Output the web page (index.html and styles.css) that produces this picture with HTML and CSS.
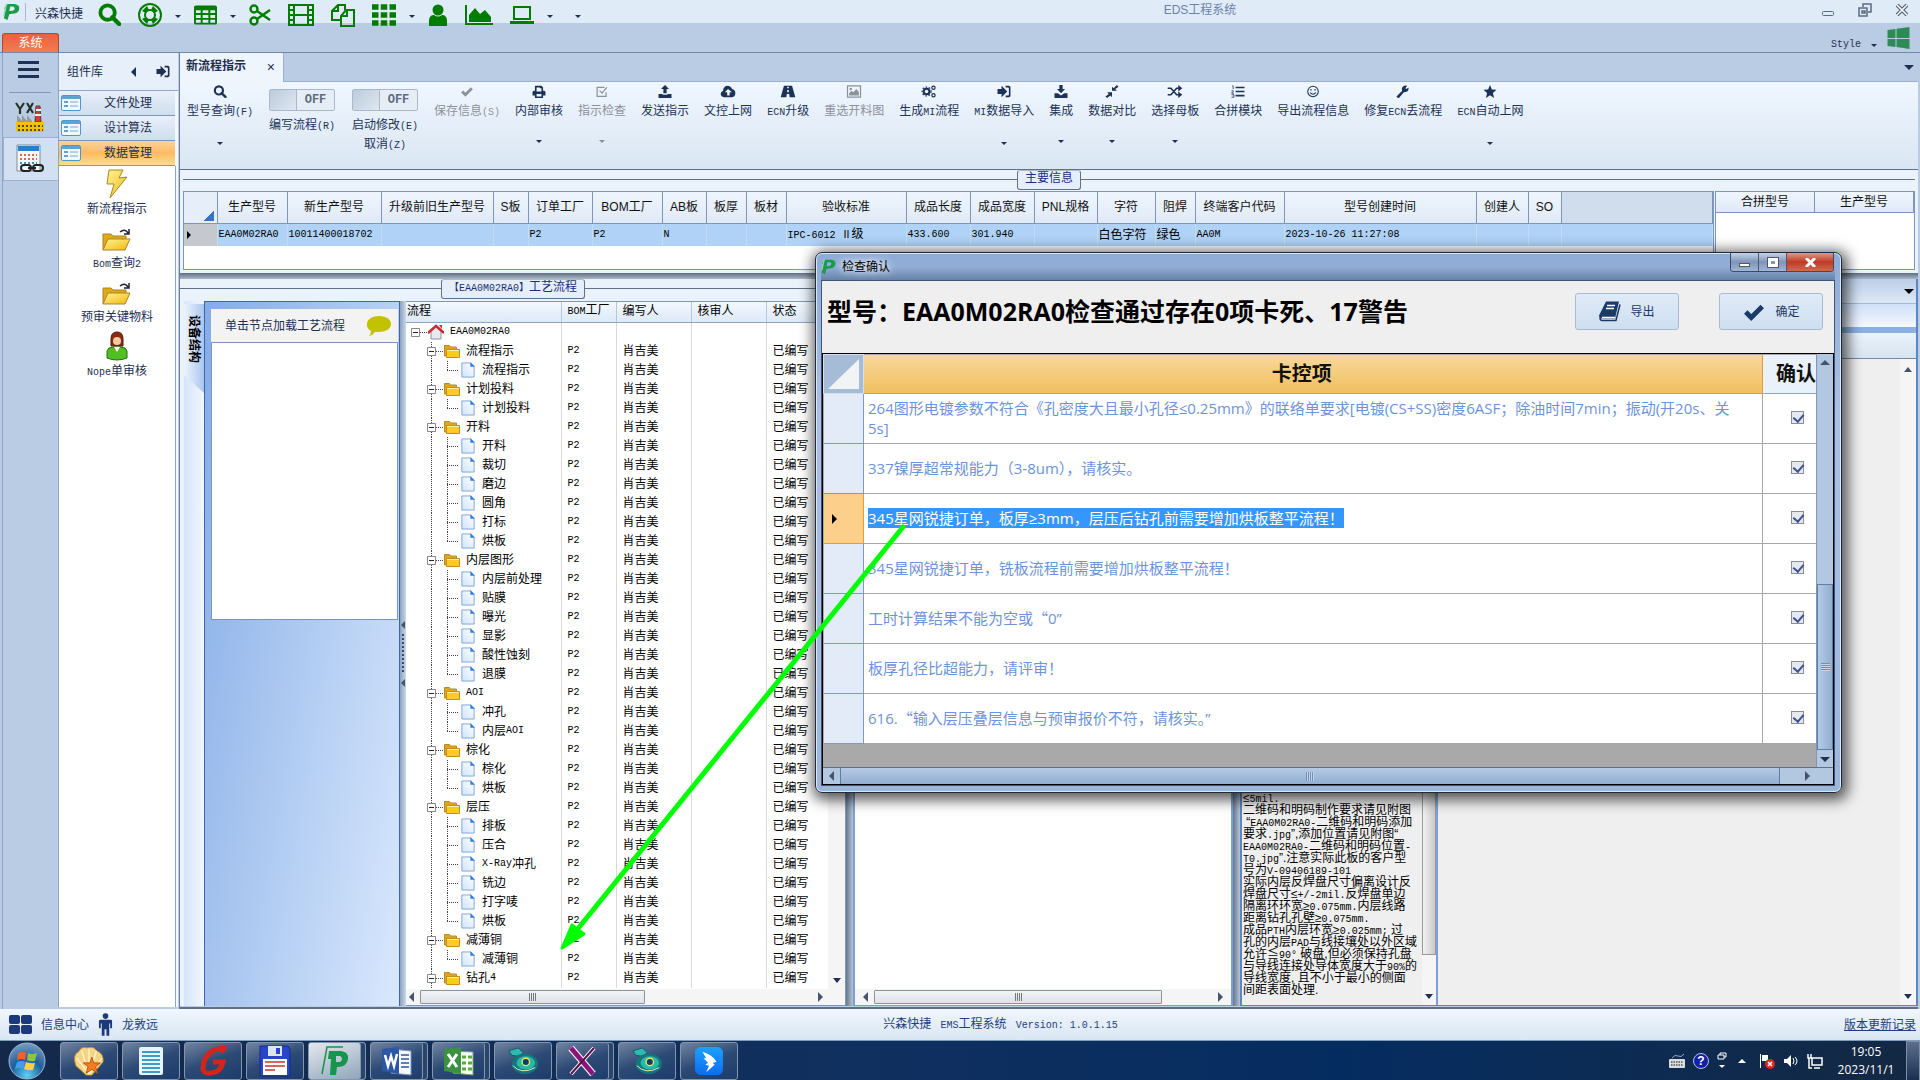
FILE: index.html
```html
<!DOCTYPE html>
<html lang="zh-CN">
<head>
	<meta charset="UTF-8">
	<title>EDS工程系统</title>
	<link rel="stylesheet" href="styles.css">
</head>
<body>
	<!-- 图标 -->
	<svg class="defs" width="0" height="0" aria-hidden="true">
		<linearGradient id="g-yellow" x1="0" y1="0" x2="1" y2="1"><stop offset="0" stop-color="#fff39a"/><stop offset="1" stop-color="#f2b90a"/></linearGradient>
		<linearGradient id="g-doc" x1="1" y1="0" x2="0" y2="1"><stop offset="0" stop-color="#ffffff"/><stop offset="1" stop-color="#cfe4fb"/></linearGradient>
		<radialGradient id="g-orb" cx=".5" cy=".9" r=".9"><stop offset="0" stop-color="#5fd0f5"/><stop offset=".5" stop-color="#1d5f9c"/><stop offset="1" stop-color="#7d9dc0"/></radialGradient>
		<linearGradient id="g-ding" x1="0" y1="0" x2="0" y2="1"><stop offset="0" stop-color="#1ea0ff"/><stop offset="1" stop-color="#0a6df0"/></linearGradient>
		<symbol id="i-logo" viewBox="0 0 20 20"><path d="M5 1h8q6 1 5 6t-8 5l-3 .5L5 19 1 17 3 6H1zm3 3L7 9l4-.5q2-1 2-2.500t-2-2z" fill="#1c9a4a" fill-rule="evenodd"/><path d="M4 1L1 14" stroke="#8fd9b0" stroke-width="1.500"/></symbol>
		<symbol id="i-search" viewBox="0 0 24 24"><circle cx="10" cy="10" r="7.500" fill="none" stroke="currentColor" stroke-width="4"/><path d="M15 15l7 7" stroke="currentColor" stroke-width="4.500" stroke-linecap="round"/></symbol>
		<symbol id="i-life" viewBox="0 0 24 24"><circle cx="12" cy="12" r="11" fill="none" stroke="currentColor" stroke-width="2"/><circle cx="12" cy="12" r="5" fill="none" stroke="currentColor" stroke-width="2"/><path d="M4 8l4 2 3-3-2-4zM20 8l-4 2-3-3 2-4zM4 16l4-2 3 3-2 4zM20 16l-4-2-3 3 2 4z" fill="currentColor"/></symbol>
		<symbol id="i-table" viewBox="0 0 24 22"><path fill-rule="evenodd" fill="currentColor" d="M2 1h20q2 0 2 2v16q0 2-2 2H2q-2 0-2-2V3q0-2 2-2zm0 5v3h5V6zm7 0v3h6V6zm8 0v3h5V6zM2 11v3h5v-3zm7 0v3h6v-3zm8 0v3h5v-3zM2 16v3h5v-3zm7 0v3h6v-3zm8 0v3h5v-3z"/></symbol>
		<symbol id="i-cut" viewBox="0 0 22 22"><g fill="none" stroke="currentColor" stroke-width="2.400"><circle cx="5" cy="5" r="3.500"/><circle cx="5" cy="17" r="3.500"/><path d="M8 7l13 9M8 15l13-9"/></g></symbol>
		<symbol id="i-film" viewBox="0 0 26 24"><path fill-rule="evenodd" fill="currentColor" d="M0 1h26v22H0zM2 3v3h3V3zm0 5v3h3V8zm0 5v3h3v-3zm0 5v3h3v-3zM21 3v3h3V3zm0 5v3h3V8zm0 5v3h3v-3zm0 5v3h3v-3zM7 3v8h12V3zm0 10v8h12v-8z"/></symbol>
		<symbol id="i-copy" viewBox="0 0 24 24"><path fill="none" stroke="currentColor" stroke-width="2" d="M9 17H1V8l6-6h7v5M7 2v6H1M10 23V13l5-6h8v16zM16 7v6h-6"/></symbol>
		<symbol id="i-grid" viewBox="0 0 24 22"><path stroke="currentColor" stroke-width="5.500" stroke-dasharray="6.500 2.250" d="M0 3h24M0 11h24M0 19h24"/></symbol>
		<symbol id="i-user" viewBox="0 0 20 22"><circle cx="10" cy="6" r="5.500" fill="currentColor"/><path fill="currentColor" d="M1 22q-1-12 5-11 4 3 8 0 6-1 5 11z"/></symbol>
		<symbol id="i-chart" viewBox="0 0 28 22"><path fill="currentColor" d="M0 1h2v18h26v2H0zM4 18V11l6-7 5 6 5-4 6 7v5z"/></symbol>
		<symbol id="i-laptop" viewBox="0 0 24 20"><path fill="none" stroke="currentColor" stroke-width="2" d="M4 2h16v12H4z"/><path fill="currentColor" d="M0 16h24v3H0z"/></symbol>
		<symbol id="i-check" viewBox="0 0 16 16"><path fill="none" stroke="currentColor" stroke-width="3.500" d="M2 8l4 4L14 4"/></symbol>
		<symbol id="i-print" viewBox="0 0 16 16"><path fill="currentColor" fill-rule="evenodd" d="M3 1h8l2 2v4h1q2 0 2 2v4h-3v3H3v-3H0V9q0-2 2-2h1zm2 2v5h6V4H9V3zm0 8v3h6v-3z"/></symbol>
		<symbol id="i-csq" viewBox="0 0 16 16"><path fill="none" stroke="currentColor" stroke-width="1.500" d="M13 9v5H2V3h9M5 7l3 3 6-7"/></symbol>
		<symbol id="i-up" viewBox="0 0 16 16"><path fill="currentColor" d="M8 0l5 5h-3v5H6V5H3zM0 11h5v1h6v-1h5v5H0z"/></symbol>
		<symbol id="i-cloud" viewBox="0 0 18 16"><path fill="currentColor" fill-rule="evenodd" d="M4 15q-4-1-4-4t3-4q0-5 5-6 4 0 6 4 4 1 4 5t-4 5zm5-10L5 9h3v4h3V9h3z"/></symbol>
		<symbol id="i-road" viewBox="0 0 18 16"><path fill="currentColor" fill-rule="evenodd" d="M4 1h10l4 14h-7l-.500-4h-3L7 15H0zm4 1v2h2V2zm0 4v3h2V6z"/></symbol>
		<symbol id="i-img" viewBox="0 0 18 16"><path fill="none" stroke="currentColor" stroke-width="1.500" d="M1 1h16v14H1z"/><path fill="currentColor" d="M3 13v-3l3-3 2 2 4-4 3 4v4z"/><circle cx="5" cy="5" r="1.500" fill="currentColor"/></symbol>
		<symbol id="i-cogs" viewBox="0 0 18 16"><g fill="none" stroke="currentColor"><circle cx="6" cy="8" r="3.500" stroke-width="2.500"/><circle cx="6" cy="8" r="5.500" stroke-width="1.500" stroke-dasharray="2 2"/><circle cx="14.500" cy="3.500" r="2" stroke-width="1.500"/><circle cx="14.500" cy="12.500" r="2" stroke-width="1.500"/></g></symbol>
		<symbol id="i-in" viewBox="0 0 16 16"><path fill="currentColor" d="M0 5h5V1l7 7-7 7v-4H0zM10 1h4q2 0 2 2v10q0 2-2 2h-4v-2h3q1 0 1-1V4q0-1-1-1h-3z"/></symbol>
		<symbol id="i-down" viewBox="0 0 16 16"><path fill="currentColor" d="M6 0h4v5h3l-5 5-5-5h3zM0 10h4l4 3 4-3h4v6H0z"/></symbol>
		<symbol id="i-comp" viewBox="0 0 16 16"><path fill="currentColor" d="M16 2l-4 3 2 2H8V2l2 2 4-4zM0 14l4-3-2-2h6v6l-2-2-4 3z"/></symbol>
		<symbol id="i-rand" viewBox="0 0 18 16"><path fill="none" stroke="currentColor" stroke-width="2" d="M0 4h4l7 8h4M0 12h4l7-8h4"/><path fill="currentColor" d="M13 0l5 4-5 4zM13 8l5 4-5 4z"/></symbol>
		<symbol id="i-list" viewBox="0 0 16 16"><path stroke="currentColor" stroke-width="2" d="M5 3h11M5 8h11M5 13h11"/><path stroke="currentColor" fill="none" d="M1 1h1v4M0 7h2v1L0 10h3M0 12h3v3H0"/></symbol>
		<symbol id="i-smile" viewBox="0 0 16 16"><circle cx="8" cy="8" r="6.500" fill="none" stroke="currentColor" stroke-width="1.300"/><path fill="none" stroke="currentColor" stroke-width="1.300" d="M4.500 9.500q3.500 4 7 0M5.500 5v2M10.500 5v2"/></symbol>
		<symbol id="i-wrench" viewBox="0 0 16 16"><path fill="currentColor" d="M15 3l-3 2-1-1 2-3q-4-1-6 2-1 2 0 4l-7 7q1 2 3 2l6-7q6 0 6-6z"/></symbol>
		<symbol id="i-star" viewBox="0 0 16 16"><path fill="currentColor" d="M8 0l2.300 5.400 5.700.500-4.400 3.800L13 16l-5-3.300L3 16l1.400-6.300L0 5.900l5.700-.500z"/></symbol>
		<symbol id="i-form" viewBox="0 0 20 16"><rect x=".5" y=".5" width="19" height="15" rx="1.500" fill="#eef8ff" stroke="#4f97c9"/><path fill="#5ba4d6" d="M1 1h18v3H1z"/><path stroke="#3f7fc0" stroke-width="1.500" d="M3 7h4M3 11h4"/><path stroke="#b8cfe0" stroke-width="2" d="M9 7h8M9 11h8"/></symbol>
		<symbol id="i-bolt" viewBox="0 0 24 30"><path fill="url(#g-yellow)" stroke="#a08a20" d="M4 1l14 0-4 8 8-1L5 29l4-14H2z"/></symbol>
		<symbol id="i-open" viewBox="0 0 30 24"><path fill="#e3a915" stroke="#a8852a" d="M1 22V6h8l2 2h13v5"/><path fill="url(#g-yellow)" stroke="#a8852a" d="M1 22l5-11h22l-5 11z"/><path fill="none" stroke="#223" stroke-width="1.500" d="M18 4q5-4 8 1M27 1v5h-5"/></symbol>
		<symbol id="i-person" viewBox="0 0 22 30"><path fill="#8e2a14" stroke="#4a1a10" d="M5 8q0-7 6-7t6 7v7H5z"/><circle cx="11" cy="10" r="4" fill="#f4c9a0"/><path fill="#4fbf22" stroke="#256b10" d="M1 27V20q1-4 6-4h8q5 0 6 4v7q-10 4-20 0z"/><path fill="#fff" d="M8 16l3 5 3-5z"/></symbol>
		<symbol id="i-house" viewBox="0 0 16 16"><path fill="#e8eaf0" stroke="#8d93a5" d="M3 15V7l5-5 5 5v8z"/><path fill="none" stroke="#cc2b2f" stroke-width="2.500" d="M0 9l8-7 8 7"/><path fill="#cc2b2f" d="M11 1h3v4z"/></symbol>
		<symbol id="i-folder" viewBox="0 0 16 14"><path fill="#e0a51e" stroke="#b98a2c" d="M.5 12V1.500h5l1 1.500h6v9z"/><path fill="#ffc926" stroke="#c58f16" d="M2.500 13.500V5.500h13v8z"/><path stroke="#fff0a0" d="M3 6.500h12"/></symbol>
		<symbol id="i-doc" viewBox="0 0 15 17"><path fill="url(#g-doc)" stroke="#7ba3d8" d="M1 1h9l4 4v11H1z"/><path fill="#2f7de0" d="M10 0v5h5z"/></symbol>
		<symbol id="i-box" viewBox="0 0 9 9"><path fill="#fff" stroke="#888" d="M.5.5h8v8h-8z"/><path stroke="#222" d="M2 4.500h5"/></symbol>
		<symbol id="i-chat" viewBox="0 0 24 20"><path fill="#c2c200" d="M12 0c16 0 16 16 0 16q-2 0-4 0-2 3-6 4 2-2 2-5C-4 10 0 0 12 0z"/></symbol>
		<symbol id="i-book" viewBox="0 0 22 20"><path fill="#1c3a66" d="M7 0h13l-4 17H3q-3 0-3-3z"/><path stroke="#fff" stroke-width="1.300" fill="none" d="M8 4h8M7 7h8M3 16h13"/><path fill="none" stroke="#1c3a66" stroke-width="1.500" d="M21 3l-4 16H3q-2 0-2-3"/></symbol>
		<symbol id="i-win" viewBox="0 0 22 22"><path fill="#2e8b57" d="M0 3l8-1v9H0zM9 1.800L22 0v11H9zM0 12h8v8l-8-1zM9 12h13v10L9 20z"/></symbol>
		<symbol id="i-factory" viewBox="0 0 30 30"><path d="M1 1l4 6v5M9 1L5 7M12 1l6 10M18 1l-6 10" stroke="#26332a" stroke-width="2.200" fill="none"/><path fill="#d33c34" stroke="#444" d="M21 4h4l1 16h-6z"/><path stroke="#eee" stroke-width="2" d="M21 8h5M20 13h6"/><path fill="#9a9a9a" d="M2 20v-7l5 6v-6l5 6v-6l5 6v2z"/><path fill="#f2c200" d="M1 20h28v10H1z"/><path stroke="#5a4700" stroke-width="2" stroke-dasharray="2 2" d="M3 24h25M3 28h25"/></symbol>
		<symbol id="i-calc" viewBox="0 0 30 30"><path fill="#f5f8fb" stroke="#7d8a99" d="M2 1h23v26H2z"/><path fill="#2a7fc9" d="M3 2h21v5H3z"/><path stroke="#d86a4a" stroke-width="2" stroke-dasharray="2 2" d="M5 11h17M5 15h17"/><path stroke="#3c8fd0" stroke-width="2" stroke-dasharray="2 2" d="M5 19h17"/><g fill="none" stroke="#222" stroke-width="2"><rect x="6" y="21" width="10" height="6" rx="3"/><rect x="18" y="21" width="10" height="6" rx="3"/></g><path stroke="#222" stroke-width="2" d="M13 24h8"/></symbol>
		<symbol id="i-shell" viewBox="0 0 34 32"><path fill="#f5d486" stroke="#c98c37" d="M14 31L3 21Q-1 9 6 6 9 0 15 2q7-2 10 3 8 3 7 12L20 31z"/><path stroke="#fff2cc" stroke-width="1.500" d="M17 30L4 13M17 30L9 5M17 30V3M17 30l8-25M17 30l14-17"/><path fill="#f07d1e" stroke="#b5500c" d="M20 12l2 6h7l-5 4 2 7-6-4-6 4 2-7-5-4h7z"/></symbol>
		<symbol id="i-note" viewBox="0 0 26 28"><rect x="1" y="0" width="24" height="28" rx="2" fill="#e6f4fb"/><path stroke="#3c9cc4" stroke-width="2" d="M4 5h18M4 9h18M4 13h18M4 17h18M4 21h18M4 25h18"/></symbol>
		<symbol id="i-gee" viewBox="0 0 28 30"><path fill="none" stroke="#d3261b" stroke-width="5" d="M22 6l3-4-10 2Q4 10 4 22q0 6 8 5 10-1 12-11H14"/></symbol>
		<symbol id="i-save" viewBox="0 0 32 32"><path fill="#2846c8" stroke="#122a8a" d="M1 1h28l2 3v27H1z"/><path fill="#dfe4ee" d="M9 1h14v10H9z"/><path fill="#2846c8" d="M17 3h4v6h-4z"/><path fill="#fff" d="M4 14h24v16H4z"/><path stroke="#c33" stroke-width="1.500" d="M6 17h20M6 21h20M6 25h10"/></symbol>
		<symbol id="i-pap" viewBox="0 0 28 30"><path fill="none" stroke="#16954c" stroke-width="1.500" d="M12 1H6L1 28M12 1h10"/><path fill="#16954c" fill-rule="evenodd" d="M8 5h12q8 1 7 8t-9 8h-2l-1 8h-6l1-16H7zm7 5v6h4q2-1 2-3t-2-3z"/></symbol>
		<symbol id="i-word" viewBox="0 0 32 30"><path fill="#f7f9fc" stroke="#7a93c0" d="M10 3l20 2v24l-20-2z"/><path fill="#2b57a5" d="M1 3l17-2v27L1 25z"/><path fill="none" stroke="#fff" stroke-width="2.500" d="M4 9l3 11 3-10 3 10 3-12"/><path stroke="#2b57a5" stroke-width="1.500" d="M20 9h8M20 13h8M20 17h8M20 21h8"/></symbol>
		<symbol id="i-excel" viewBox="0 0 32 30"><path fill="#f7fcf7" stroke="#6ba36c" d="M10 5l20 1v23l-20-2z"/><path fill="#3a9140" d="M1 3l17-2v27L1 25z"/><path stroke="#fff" stroke-width="3" d="M5 8l9 13M14 8L5 21"/><path stroke="#5aab3c" stroke-width="3" stroke-dasharray="4 2" d="M19 11h10M19 17h10M19 23h10"/></symbol>
		<symbol id="i-eye" viewBox="0 0 34 30"><path fill="#2fb9b0" stroke="#0d5a62" d="M2 4l10-3 5 5-4 4-8-1z"/><ellipse cx="19" cy="18" rx="14" ry="11" fill="#14757c"/><ellipse cx="20" cy="17" rx="10" ry="7" fill="#2cb8a6"/><circle cx="20" cy="16" r="4" fill="#153c50" stroke="#e9e26a" stroke-width="1.500"/><path stroke="#e8f5c0" fill="none" d="M6 20q10 10 24 2"/></symbol>
		<symbol id="i-xx" viewBox="0 0 32 32"><path stroke="#fff" stroke-width="7" d="M4 3l22 26"/><path stroke="#fff" stroke-width="4" d="M27 3L4 29"/><path stroke="#8b1478" stroke-width="5" d="M4 3l22 26"/><path stroke="#5a1050" stroke-width="2" d="M27 3L4 29"/></symbol>
		<symbol id="i-ding" viewBox="0 0 30 30"><rect width="30" height="30" rx="6" fill="url(#g-ding)"/><path fill="#fff" d="M8 5q12 4 15 11l-4 1 2 2-9 8 3-7-4-1 3-2-5-5 3 0z"/></symbol>
		<symbol id="i-men" viewBox="0 0 16 24"><circle cx="8" cy="3" r="3" fill="#1c3a7a"/><path fill="#1c3a7a" d="M1 8q0-1 2-1h10q2 0 2 1v8h-2v-5h-1v13H9v-7H7v7H4V11H3v5H1z"/></symbol>
	</svg>

	<header class="titlebar">
		<svg class="ic logo" width="18" height="18"><use href="#i-logo"/></svg>
		<span class="brand">兴森快捷</span>
		<div class="quick">
			<button aria-label="查询"><svg width="23" height="23"><use href="#i-search"/></svg></button>
			<button aria-label="帮助"><svg width="24" height="24"><use href="#i-life"/></svg></button><i class="caret"></i>
			<button aria-label="表格"><svg width="23" height="22"><use href="#i-table"/></svg></button><i class="caret"></i>
			<button aria-label="剪切"><svg width="22" height="22"><use href="#i-cut"/></svg></button>
			<button aria-label="胶片"><svg width="26" height="24"><use href="#i-film"/></svg></button>
			<button aria-label="复制"><svg width="24" height="24"><use href="#i-copy"/></svg></button>
			<button aria-label="网格"><svg width="24" height="22"><use href="#i-grid"/></svg></button><i class="caret"></i>
			<button aria-label="用户"><svg width="20" height="22"><use href="#i-user"/></svg></button>
			<button aria-label="图表"><svg width="28" height="22"><use href="#i-chart"/></svg></button>
			<button aria-label="电脑"><svg width="24" height="20"><use href="#i-laptop"/></svg></button><i class="caret"></i>
			<i class="caret more"></i>
		</div>
		<span class="apptitle">EDS工程系统</span>
		<div class="winbtns">
			<button aria-label="最小化"><svg width="12" height="14" fill="none" stroke="#5d6b80"><rect x=".5" y="8.500" width="11" height="4" rx="1"/></svg></button>
			<button aria-label="还原"><svg width="14" height="14" fill="none" stroke="#5d6b80" stroke-width="1.500"><path d="M5 4V1h8v8h-3M1 5h8v8H1zM4 8h3v2H4z"/></svg></button>
			<button aria-label="关闭"><svg width="12" height="12" fill="none"><path d="M1 1l10 10M11 1L1 11" stroke="#5d6b80" stroke-width="4"/><path d="M1 1l10 10M11 1L1 11" stroke="#fff" stroke-width="1.500"/></svg></button>
		</div>
	</header>

	<nav class="tabband">
		<button class="systab">系统</button>
		<div class="style">
			<button class="en">Style</button><i class="caret"></i>
			<svg width="23" height="22"><use href="#i-win"/></svg>
		</div>
	</nav>

	<main class="body">
		<div class="rail">
			<button class="menu" aria-label="菜单"><i></i><i></i><i></i></button>
			<button class="railbtn" aria-label="工厂"><svg width="30" height="30"><use href="#i-factory"/></svg></button>
			<button class="railbtn on" aria-label="计算"><svg width="30" height="30"><use href="#i-calc"/></svg></button>
		</div>

		<aside class="sidebar">
			<div class="sidehead"><span>组件库</span><i class="arr left"></i><svg width="14" height="13"><use href="#i-in"/></svg></div>
			<button class="acc"><svg width="20" height="16"><use href="#i-form"/></svg><span>文件处理</span></button>
			<button class="acc"><svg width="20" height="16"><use href="#i-form"/></svg><span>设计算法</span></button>
			<button class="acc on"><svg width="20" height="16"><use href="#i-form"/></svg><span>数据管理</span></button>
			<div class="sidelist">
				<button><svg width="24" height="30"><use href="#i-bolt"/></svg><span>新流程指示</span></button>
				<button><svg width="30" height="26"><use href="#i-open"/></svg><span><span class="en">Bom</span>查询<span class="en">2</span></span></button>
				<button><svg width="30" height="26"><use href="#i-open"/></svg><span>预审关键物料</span></button>
				<button><svg width="22" height="30"><use href="#i-person"/></svg><span><span class="en">Nope</span>单审核</span></button>
			</div>
		</aside>

		<section class="work">
			<div class="doctabs"><div class="doctab"><b>新流程指示</b><button aria-label="关闭标签">×</button></div><i class="arr down"></i></div>

			<div class="ribbon">
				<button class="rb"><svg><use href="#i-search"/></svg><span>型号查询<span class="en">(F)</span></span><i class="caret"></i></button>
				<div class="rb tg"><button class="toggle"><i></i><b>OFF</b></button><span>编写流程<span class="en">(R)</span></span></div>
				<div class="rb tg"><button class="toggle"><i></i><b>OFF</b></button><span>启动修改<span class="en">(E)</span></span><span>取消<span class="en">(Z)</span></span></div>
				<button class="rb off" disabled><svg><use href="#i-check"/></svg><span>保存信息<span class="en">(S)</span></span></button>
				<button class="rb"><svg><use href="#i-print"/></svg><span>内部审核</span><i class="caret"></i></button>
				<button class="rb off" disabled><svg><use href="#i-csq"/></svg><span>指示检查</span><i class="caret"></i></button>
				<button class="rb"><svg><use href="#i-up"/></svg><span>发送指示</span></button>
				<button class="rb"><svg><use href="#i-cloud"/></svg><span>文控上网</span></button>
				<button class="rb"><svg><use href="#i-road"/></svg><span><span class="en">ECN</span>升级</span></button>
				<button class="rb off" disabled><svg><use href="#i-img"/></svg><span>重选开料图</span></button>
				<button class="rb"><svg><use href="#i-cogs"/></svg><span>生成<span class="en">MI</span>流程</span></button>
				<button class="rb"><svg><use href="#i-in"/></svg><span><span class="en">MI</span>数据导入</span><i class="caret"></i></button>
				<button class="rb"><svg><use href="#i-down"/></svg><span>集成</span><i class="caret"></i></button>
				<button class="rb"><svg><use href="#i-comp"/></svg><span>数据对比</span><i class="caret"></i></button>
				<button class="rb"><svg><use href="#i-rand"/></svg><span>选择母板</span><i class="caret"></i></button>
				<button class="rb"><svg><use href="#i-list"/></svg><span>合拼模块</span></button>
				<button class="rb"><svg><use href="#i-smile"/></svg><span>导出流程信息</span></button>
				<button class="rb"><svg><use href="#i-wrench"/></svg><span>修复<span class="en">ECN</span>丢流程</span></button>
				<button class="rb"><svg><use href="#i-star"/></svg><span><span class="en">ECN</span>自动上网</span><i class="caret"></i></button>
			</div>

			<!-- 主要信息 -->
			<div class="group info">
				<div class="legend"><span>主要信息</span></div>
				<div class="grids">
					<div class="gridbox">
						<table class="grid">
							<colgroup><col class="w33"><col class="w70"><col class="w94"><col class="w112"><col class="w35"><col class="w64"><col class="w70"><col class="w44"><col class="w40"><col class="w40"><col class="w120"><col class="w64"><col class="w64"><col class="w63"><col class="w58"><col class="w40"><col class="w89"><col class="w192"><col class="w52"><col class="w33"><col></colgroup>
							<thead><tr><th class="corner"></th><th>生产型号</th><th>新生产型号</th><th>升级前旧生产型号</th><th>S板</th><th>订单工厂</th><th>BOM工厂</th><th>AB板</th><th>板厚</th><th>板材</th><th>验收标准</th><th>成品长度</th><th>成品宽度</th><th>PNL规格</th><th>字符</th><th>阻焊</th><th>终端客户代码</th><th>型号创建时间</th><th>创建人</th><th>SO</th><th class="fill"></th></tr></thead>
							<tbody><tr><td class="rowhead"><i class="arr right"></i></td><td class="en">EAA0M02RA0</td><td class="en">10011400018702</td><td></td><td></td><td class="en">P2</td><td class="en">P2</td><td class="en">N</td><td></td><td></td><td><span class="en">IPC-6012 Ⅱ</span>级</td><td class="en">433.600</td><td class="en">301.940</td><td></td><td>白色字符</td><td>绿色</td><td class="en">AA0M</td><td class="en">2023-10-26 11:27:08</td><td></td><td></td><td></td></tr></tbody>
						</table>
					</div>
					<div class="gridbox side">
						<table class="grid"><thead><tr><th>合拼型号</th><th>生产型号</th></tr></thead></table>
					</div>
				</div>
			</div>
			<div class="hsplit"></div>

			<div class="lower">
				<div class="group flow">
					<div class="legend"><span><span class="en">【EAA0M02RA0】</span>工艺流程</span></div>
					<div class="flowbody">
						<div class="vtab"><b>设备结构</b></div>
						<div class="device">
							<div class="devhead"><span>单击节点加载工艺流程</span><svg width="24" height="20"><use href="#i-chat"/></svg></div>
							<div class="devbox"></div>
						</div>
						<div class="vsplit"><i class="arr left"></i><i class="dots"></i><i class="arr left"></i></div>
						<div class="treepane">
							<div class="treeview">
								<table class="tree">
									<colgroup><col class="w155"><col class="w55"><col class="w75"><col class="w75"><col></colgroup>
									<thead><tr><th>流程</th><th><span class="en">BOM</span>工厂</th><th>编写人</th><th>核审人</th><th>状态</th></tr></thead>
									<tbody>
										<tr><td><div class="node l0"><svg class="bx"><use href="#i-box"/></svg><svg><use href="#i-house"/></svg><span class="en">EAA0M02RA0</span></div></td><td></td><td></td><td></td><td></td></tr>
										<tr><td><div class="node l1"><svg class="bx"><use href="#i-box"/></svg><svg><use href="#i-folder"/></svg>流程指示</div></td><td>P2</td><td>肖吉美</td><td></td><td>已编写</td></tr>
										<tr><td><div class="node l2 last"><svg><use href="#i-doc"/></svg>流程指示</div></td><td>P2</td><td>肖吉美</td><td></td><td>已编写</td></tr>
										<tr><td><div class="node l1"><svg class="bx"><use href="#i-box"/></svg><svg><use href="#i-folder"/></svg>计划投料</div></td><td>P2</td><td>肖吉美</td><td></td><td>已编写</td></tr>
										<tr><td><div class="node l2 last"><svg><use href="#i-doc"/></svg>计划投料</div></td><td>P2</td><td>肖吉美</td><td></td><td>已编写</td></tr>
										<tr><td><div class="node l1"><svg class="bx"><use href="#i-box"/></svg><svg><use href="#i-folder"/></svg>开料</div></td><td>P2</td><td>肖吉美</td><td></td><td>已编写</td></tr>
										<tr><td><div class="node l2"><svg><use href="#i-doc"/></svg>开料</div></td><td>P2</td><td>肖吉美</td><td></td><td>已编写</td></tr>
										<tr><td><div class="node l2"><svg><use href="#i-doc"/></svg>裁切</div></td><td>P2</td><td>肖吉美</td><td></td><td>已编写</td></tr>
										<tr><td><div class="node l2"><svg><use href="#i-doc"/></svg>磨边</div></td><td>P2</td><td>肖吉美</td><td></td><td>已编写</td></tr>
										<tr><td><div class="node l2"><svg><use href="#i-doc"/></svg>圆角</div></td><td>P2</td><td>肖吉美</td><td></td><td>已编写</td></tr>
										<tr><td><div class="node l2"><svg><use href="#i-doc"/></svg>打标</div></td><td>P2</td><td>肖吉美</td><td></td><td>已编写</td></tr>
										<tr><td><div class="node l2 last"><svg><use href="#i-doc"/></svg>烘板</div></td><td>P2</td><td>肖吉美</td><td></td><td>已编写</td></tr>
										<tr><td><div class="node l1"><svg class="bx"><use href="#i-box"/></svg><svg><use href="#i-folder"/></svg>内层图形</div></td><td>P2</td><td>肖吉美</td><td></td><td>已编写</td></tr>
										<tr><td><div class="node l2"><svg><use href="#i-doc"/></svg>内层前处理</div></td><td>P2</td><td>肖吉美</td><td></td><td>已编写</td></tr>
										<tr><td><div class="node l2"><svg><use href="#i-doc"/></svg>贴膜</div></td><td>P2</td><td>肖吉美</td><td></td><td>已编写</td></tr>
										<tr><td><div class="node l2"><svg><use href="#i-doc"/></svg>曝光</div></td><td>P2</td><td>肖吉美</td><td></td><td>已编写</td></tr>
										<tr><td><div class="node l2"><svg><use href="#i-doc"/></svg>显影</div></td><td>P2</td><td>肖吉美</td><td></td><td>已编写</td></tr>
										<tr><td><div class="node l2"><svg><use href="#i-doc"/></svg>酸性蚀刻</div></td><td>P2</td><td>肖吉美</td><td></td><td>已编写</td></tr>
										<tr><td><div class="node l2 last"><svg><use href="#i-doc"/></svg>退膜</div></td><td>P2</td><td>肖吉美</td><td></td><td>已编写</td></tr>
										<tr><td><div class="node l1"><svg class="bx"><use href="#i-box"/></svg><svg><use href="#i-folder"/></svg><span class="en">AOI</span></div></td><td>P2</td><td>肖吉美</td><td></td><td>已编写</td></tr>
										<tr><td><div class="node l2"><svg><use href="#i-doc"/></svg>冲孔</div></td><td>P2</td><td>肖吉美</td><td></td><td>已编写</td></tr>
										<tr><td><div class="node l2 last"><svg><use href="#i-doc"/></svg>内层<span class="en">AOI</span></div></td><td>P2</td><td>肖吉美</td><td></td><td>已编写</td></tr>
										<tr><td><div class="node l1"><svg class="bx"><use href="#i-box"/></svg><svg><use href="#i-folder"/></svg>棕化</div></td><td>P2</td><td>肖吉美</td><td></td><td>已编写</td></tr>
										<tr><td><div class="node l2"><svg><use href="#i-doc"/></svg>棕化</div></td><td>P2</td><td>肖吉美</td><td></td><td>已编写</td></tr>
										<tr><td><div class="node l2 last"><svg><use href="#i-doc"/></svg>烘板</div></td><td>P2</td><td>肖吉美</td><td></td><td>已编写</td></tr>
										<tr><td><div class="node l1"><svg class="bx"><use href="#i-box"/></svg><svg><use href="#i-folder"/></svg>层压</div></td><td>P2</td><td>肖吉美</td><td></td><td>已编写</td></tr>
										<tr><td><div class="node l2"><svg><use href="#i-doc"/></svg>排板</div></td><td>P2</td><td>肖吉美</td><td></td><td>已编写</td></tr>
										<tr><td><div class="node l2"><svg><use href="#i-doc"/></svg>压合</div></td><td>P2</td><td>肖吉美</td><td></td><td>已编写</td></tr>
										<tr><td><div class="node l2"><svg><use href="#i-doc"/></svg><span class="en">X-Ray</span>冲孔</div></td><td>P2</td><td>肖吉美</td><td></td><td>已编写</td></tr>
										<tr><td><div class="node l2"><svg><use href="#i-doc"/></svg>铣边</div></td><td>P2</td><td>肖吉美</td><td></td><td>已编写</td></tr>
										<tr><td><div class="node l2"><svg><use href="#i-doc"/></svg>打字唛</div></td><td>P2</td><td>肖吉美</td><td></td><td>已编写</td></tr>
										<tr><td><div class="node l2 last"><svg><use href="#i-doc"/></svg>烘板</div></td><td>P2</td><td>肖吉美</td><td></td><td>已编写</td></tr>
										<tr><td><div class="node l1"><svg class="bx"><use href="#i-box"/></svg><svg><use href="#i-folder"/></svg>减薄铜</div></td><td>P2</td><td>肖吉美</td><td></td><td>已编写</td></tr>
										<tr><td><div class="node l2 last"><svg><use href="#i-doc"/></svg>减薄铜</div></td><td>P2</td><td>肖吉美</td><td></td><td>已编写</td></tr>
										<tr><td><div class="node l1"><svg class="bx"><use href="#i-box"/></svg><svg><use href="#i-folder"/></svg>钻孔<span class="en">4</span></div></td><td>P2</td><td>肖吉美</td><td></td><td>已编写</td></tr>
									</tbody>
								</table>
								<div class="vbar"><i class="arr down"></i></div>
							</div>
							<div class="hbar"><i class="arr left"></i><i class="thumb"></i><i class="arr right"></i></div>
						</div>
					</div>
				</div>
				<div class="gap"></div>
				<div class="blank">
					<div class="space"></div>
					<div class="hbar"><i class="arr left"></i><i class="thumb"></i><i class="arr right"></i></div>
				</div>
				<div class="gap"></div>
				<div class="rpane">
					<div class="rtop"><i class="arr down"></i></div>
					<div class="rlight"></div>
					<div class="rhead"></div>
					<div class="rbody">
						<div class="notes">
							<p>≤<span class="en">5mil.</span><br>
							二维码和明码制作要求请见附图<br>
							&nbsp;“<span class="en">EAA0M02RA0-</span>二维码和明码添加<br>
							要求<span class="en">.jpg</span>”,添加位置请见附图“<br>
							<span class="en">EAA0M02RA0-</span>二维码和明码位置<span class="en">-</span><br>
							<span class="en">T0.jpg</span>”.注意实际此板的客户型<br>
							号为<span class="en">V-09406189-101</span><br>
							实际内层反焊盘尺寸偏离设计反<br>
							焊盘尺寸≤<span class="en">+/-2mil.</span>反焊盘单边<br>
							隔离环环宽≥<span class="en">0.075mm.</span>内层线路<br>
							距离钻孔孔壁≥<span class="en">0.075mm.</span><br>
							成品<span class="en">PTH</span>内层环宽≥<span class="en">0.025mm;</span> 过<br>
							孔的内层<span class="en">PAD</span>与线接壤处以外区域<br>
							允许≦<span class="en">90°</span> 破盘,但必须保持孔盘<br>
							与导线连接处导体宽度大于<span class="en">90%</span>的<br>
							导线宽度, 且不小于最小的侧面<br>
							间距表面处理.</p>
						</div>
						<div class="vbar"><i class="thumb"></i><i class="arr down"></i></div>
						<div class="pane"></div>
						<div class="vbar far"><i class="arr up"></i><i class="arr down"></i></div>
					</div>
				</div>
			</div>
		</section>
	</main>

	<footer class="status">
		<div class="who">
			<svg width="23" height="20" fill="#1c3a7a"><rect width="11" height="9" rx="2"/><rect x="12" width="11" height="9" rx="2"/><rect y="10" width="11" height="9" rx="2"/><rect x="12" y="10" width="11" height="9" rx="2"/></svg><span>信息中心</span>
			<svg width="15" height="23"><use href="#i-men"/></svg><span>龙敦远</span>
		</div>
		<div class="ver">兴森快捷 <span class="en">&nbsp;EMS</span>工程系统 <span class="en">&nbsp;Version: 1.0.1.15</span></div>
		<a href="#">版本更新记录</a>
	</footer>

	<div class="taskbar">
		<button class="orb" aria-label="开始"><svg width="38" height="38"><circle cx="19" cy="19" r="18" fill="url(#g-orb)" stroke="#9db8d2"/><path fill="#f0622a" d="M10 11q5-2 8 0l-1 7q-4-2-8 0z"/><path fill="#8cc63f" d="M20 11q4 2 9 0l-2 8q-4 1-8-1z"/><path fill="#3fa0e8" d="M9 20q4-2 8 0l-2 7q-4-2-8 0z"/><path fill="#ffd23c" d="M18 20q4 2 9 1l-2 7q-5 1-9-1z"/></svg></button>
		<button class="task" aria-label="贝壳"><svg width="34" height="30"><use href="#i-shell"/></svg></button>
		<button class="task" aria-label="记事本"><svg width="26" height="28"><use href="#i-note"/></svg></button>
		<button class="task" aria-label="Genesis"><svg width="28" height="30"><use href="#i-gee"/></svg></button>
		<button class="task" aria-label="保存"><svg width="32" height="32"><use href="#i-save"/></svg></button>
		<button class="task multi on" aria-label="EDS"><svg width="28" height="30"><use href="#i-pap"/></svg></button>
		<button class="task multi" aria-label="Word"><svg width="32" height="30"><use href="#i-word"/></svg></button>
		<button class="task multi" aria-label="Excel"><svg width="32" height="30"><use href="#i-excel"/></svg></button>
		<button class="task" aria-label="查看器"><svg width="34" height="28"><use href="#i-eye"/></svg></button>
		<button class="task multi" aria-label="X"><svg width="32" height="32"><use href="#i-xx"/></svg></button>
		<button class="task" aria-label="查看器"><svg width="34" height="28"><use href="#i-eye"/></svg></button>
		<button class="task" aria-label="钉钉"><svg width="28" height="30"><use href="#i-ding"/></svg></button>
		<div class="tray">
			<svg width="16" height="16"><path fill="none" stroke="#9aa7b5" d="M3 5q3-4 6-2t6-2"/><rect y="6" width="16" height="9" rx="1" fill="#d9dde2"/><path stroke="#555" stroke-width="1.500" stroke-dasharray="1.500 1" d="M2 9h12M2 12h12"/></svg>
			<span class="help">?</span>
			<svg width="10" height="18" fill="none" stroke="#fff"><path d="M3 3V1h6v4H7M1 3h6v4H1z"/><path fill="#fff" stroke="none" d="M2 13h6l-3 3z"/></svg>
			<i class="arr up"></i>
			<svg width="16" height="16"><path fill="#fff" d="M1 1h1v14H1zM3 2h6v6H3z"/><circle cx="11" cy="11" r="5" fill="#d6291e"/><path stroke="#fff" stroke-width="1.500" d="M9 9l4 4M13 9l-4 4"/></svg>
			<svg width="16" height="14"><path fill="#fff" d="M1 5h3l4-4v12l-4-4H1z"/><path fill="none" stroke="#fff" d="M10 4q2 3 0 6M12 3q4 4 0 8"/></svg>
			<svg width="16" height="16" fill="none" stroke="#fff"><path d="M5 5h10v7H5zM7 15h6M1 1v4h3V1M2 5v10h3" stroke-width="1.500"/></svg>
		</div>
		<div class="clock">19:05<br>2023/11/1</div>
		<button class="peek" aria-label="显示桌面"></button>
	</div>

	<!-- 检查确认窗口 -->
	<div class="dialog" role="dialog" aria-label="检查确认">
		<div class="dlgtitle">
			<svg width="16" height="16"><use href="#i-logo"/></svg><span>检查确认</span>
			<div class="dlgbtns">
				<button aria-label="最小化"><i class="min"></i></button>
				<button aria-label="最大化"><i class="max"></i></button>
				<button class="x" aria-label="关闭"><svg width="11" height="9"><path stroke="#fff" stroke-width="3" d="M1 0l9 9M10 0L1 9"/></svg></button>
			</div>
		</div>
		<div class="client">
			<div class="dlghead">
				<h1>型号：EAA0M02RA0检查通过存在0项卡死、17警告</h1>
				<div class="acts">
					<button><svg width="22" height="21"><use href="#i-book"/></svg>导出</button>
					<button><svg width="24" height="22"><use href="#i-check"/></svg>确定</button>
				</div>
			</div>
			<div class="listwrap">
				<div class="list">
					<table>
						<colgroup><col class="w40"><col><col class="w54"></colgroup>
						<thead><tr><th class="tri"><svg width="38" height="36"><path fill="#f2f3f5" d="M4 33L35 3v30z"/></svg></th><th class="item">卡控项</th><th class="ok">确认</th></tr></thead>
						<tbody>
							<tr><td class="rh"></td><td><p>264图形电镀参数不符合《孔密度大且最小孔径≤0.25mm》的联络单要求[电镀(CS+SS)密度6ASF；除油时间7min；振动(开20s、关5s]</p></td><td><input type="checkbox" checked aria-label="确认264"></td></tr>
							<tr><td class="rh"></td><td>337镍厚超常规能力（3-8um），请核实。</td><td><input type="checkbox" checked aria-label="确认337"></td></tr>
							<tr class="cur"><td class="rh"><i class="arr right"></i></td><td><mark>345星网锐捷订单，板厚≥3mm，层压后钻孔前需要增加烘板整平流程！</mark></td><td><input type="checkbox" checked aria-label="确认345层压"></td></tr>
							<tr><td class="rh"></td><td>345星网锐捷订单，铣板流程前需要增加烘板整平流程！</td><td><input type="checkbox" checked aria-label="确认345铣板"></td></tr>
							<tr><td class="rh"></td><td>工时计算结果不能为空或<span class="cj">“</span>0”</td><td><input type="checkbox" checked aria-label="确认工时"></td></tr>
							<tr><td class="rh"></td><td>板厚孔径比超能力，请评审！</td><td><input type="checkbox" checked aria-label="确认板厚孔径比"></td></tr>
							<tr><td class="rh"></td><td>616.<span class="cj">“</span>输入层压叠层信息与预审报价不符，请核实。”</td><td><input type="checkbox" checked aria-label="确认616"></td></tr>
						</tbody>
					</table>
				</div>
				<div class="dv"><i class="arr up"></i><i class="thumb"></i><i class="arr down"></i></div>
				<div class="dh"><i class="arr left"></i><i class="thumb"></i><i class="arr right"></i></div>
			</div>
		</div>
	</div>

	<svg class="pointer" width="360" height="440" viewBox="555 515 360 440"><path stroke="#0f0" stroke-width="5" stroke-linecap="round" d="M903 527L576 931"/><path fill="#0f0" stroke="#0f0" stroke-width="3" stroke-linejoin="round" d="M562 948l10-23 12 9z"/></svg>
</body>
</html>
```

FILE: styles.css
```css
*{
	margin: 0;
	padding: 0;
	box-sizing: border-box;
}
body {
	height: 100vh;
	display: flex;
	flex-direction: column;
	overflow: hidden;
	background: #b9cce4;
	color: #1e2f50;
	font: 12px/14px "Liberation Sans", "Noto Sans CJK SC", sans-serif;
}
button {
	border: 0;
	background: none;
	font: inherit;
	color: inherit;
	white-space: nowrap;
}
table {
	border-collapse: collapse;
	table-layout: fixed;
	width: 100%;
}
svg {
	display: block;
	flex: none;
}
.defs, .dialog, .pointer {
	position: absolute;
}
/* 半角字符 */
.en {
	font-family: "Liberation Mono", "Noto Sans CJK SC", monospace;
	font-size: 10px;
	white-space: nowrap;
}
.cj {
	font-family: "Noto Sans CJK SC", sans-serif;
}
.caret {
	border: 3px solid transparent;
	border-top-color: #1e2f50;
	border-bottom: 0;
}
.arr {
	flex: none;
	border: 5px solid transparent;
}
.arr.left {
	border-right-color: #44546e;
	border-left: 0;
}
.arr.right {
	border-left-color: #44546e;
	border-right: 0;
}
.arr.down {
	border-top-color: #1e2f50;
	border-bottom: 0;
}
.arr.up {
	border-bottom-color: #44546e;
	border-top: 0;
}

/* 标题栏 */
.titlebar {
	height: 23px;
	display: flex;
	align-items: center;
	background: #dfebf7;
	padding-left: 3px;
}
.brand {
	border-left: 1px solid #a9b8cb;
	margin-left: 4px;
	padding: 4px 15px 0 9px;
}
.quick {
	display: flex;
	align-items: center;
	height: 30px;
	gap: 16px;
	color: #007d00;
}
.quick button {
	z-index: 1;
	margin-top: 6px;
}
.quick .caret {
	margin: 10px -3px 0 -4px;
}
.quick .caret.more {
	margin-left: 9px;
}
.quick svg {
	margin-right: 1px;
}
.apptitle {
	margin-left: auto;
	margin-right: auto;
	padding-bottom: 4px;
	color: #6c82a8;
}
.winbtns {
	display: flex;
	gap: 24px;
	padding: 0 12px 4px 0;
}
.tabband {
	height: 30px;
	display: flex;
	justify-content: space-between;
	align-items: flex-end;
	border-bottom: 1px solid #7388a8;
	padding-left: 2px;
}
.systab {
	width: 57px;
	height: 19px;
	border: 1px solid #b9432b;
	border-bottom: 0;
	border-radius: 3px 3px 0 0;
	background: linear-gradient(#e8623e, #f37c50);
	color: #fff;
}
.style {
	display: flex;
	align-items: center;
	gap: 10px;
	padding-right: 10px;
}
.style button, .style .caret {
	margin-top: 12px;
}
.style svg {
	margin-bottom: 2px;
}

/* 左侧 */
.body {
	flex: 1;
	min-height: 0;
	display: flex;
}
.rail {
	width: 58px;
	border-left: 1px solid #8ea6c8;
	margin-left: 2px;
	margin-right: -2px;
}
.menu {
	display: flex;
	flex-direction: column;
	gap: 4px;
	width: 42px;
	margin: 0 auto 0 6px;
	padding: 8px 11px 14px 9px;
	border-bottom: 1px solid #8297b5;
}
.menu i {
	width: 21px;
	height: 3px;
	background: #1c3357;
}
.railbtn {
	width: 100%;
	height: 44px;
	display: flex;
	justify-content: center;
	align-items: center;
	padding: 4px 4px 0 0;
}
.railbtn.on {
	padding-top: 0;
	background: #d3e0f1;
	border: 1px solid #9cb1cf;
	border-right: 0;
}
.sidebar {
	width: 120px;
	display: flex;
	flex-direction: column;
	background: #f4f8fd;
	border-left: 1px solid #8ea6c8;
	margin-bottom: 2px;
}
.sidehead {
	height: 38px;
	display: flex;
	align-items: center;
	padding: 0 8px;
	background: #e6effa;
	border-bottom: 1px solid #8ea6c8;
}
.sidehead .arr {
	margin: 0 20px 0 auto;
	border-right-color: #1c3357;
}
.acc {
	height: 25px;
	display: flex;
	align-items: center;
	width: 116px;
	padding-left: 2px;
	border-bottom: 1px solid #7d96bb;
	background: linear-gradient(#e8f0fa, #cfdded);
}
.acc span {
	flex: 1;
}
.acc.on {
	background: linear-gradient(#fbd39a, #fbbb63 50%, #fddc8e);
}
.sidelist {
	flex: 1;
	width: 117px;
	background: #fff;
	border-right: 1px solid #8ea6c8;
	padding-top: 3px;
}
.sidelist button {
	display: flex;
	flex-direction: column;
	justify-content: flex-end;
	align-items: center;
	gap: 3px;
	width: 100%;
	height: 54px;
}
.sidelist button:first-child {
	height: 47px;
}
.sidelist button > span {
	height: 14px;
}

/* 工作区 */
.work {
	flex: 1;
	min-width: 0;
	display: flex;
	flex-direction: column;
	margin-left: 1px;
	border-left: 1px solid #6880a3;
	padding-right: 2px;
}
.doctabs {
	height: 29px;
	display: flex;
	justify-content: space-between;
	align-items: center;
	padding-right: 4px;
	border-bottom: 1px solid #9bb0cc;
}
.doctab {
	width: 104px;
	height: 29px;
	padding: 6px 8px 0 6px;
	display: flex;
	justify-content: space-between;
	background: #eef5fd;
	border-right: 1px solid #9bb0cc;
}
.doctab button {
	height: 16px;
	font-size: 14px;
}
.ribbon {
	height: 88px;
	display: flex;
	gap: 15px;
	padding: 2px 7px;
	background: linear-gradient(#eff6fe, #dae6f3);
	border-bottom: 1px solid #5f7189;
}
.rb {
	display: flex;
	flex-direction: column;
	align-items: center;
	gap: 6px;
	color: #1c3357;
}
.rb > svg {
	width: 16px;
	height: 13px;
	margin-top: 1px;
}
.rb > .caret {
	margin-top: 16px;
}
.rb.off {
	color: #8c929a;
}
.rb.off .caret {
	border-top-color: #8c929a;
}
.rb.tg {
	width: 68px;
	gap: 3px;
	padding-top: 5px;
}
.toggle {
	width: 66px;
	height: 22px;
	display: flex;
	margin-bottom: 4px;
	border: 1px solid #a9b9cd;
	border-radius: 2px;
	background: #e6edf5;
	color: #5d6b80;
}
.toggle i {
	width: 27px;
	align-self: stretch;
	border-right: 1px solid #a9b9cd;
	background: linear-gradient(135deg, #bccadb, #dfe8f2);
}
.toggle b {
	flex: 1;
	padding-top: 3px;
	font: bold 12px/14px "Liberation Mono", monospace;
}
.group {
	background: #eaf2fc;
}
.legend {
	display: flex;
	justify-content: center;
	height: 21px;
	background: linear-gradient(#5f7189, #5f7189) 0 9px / 100% 1px no-repeat;
}
.legend > span {
	height: 20px;
	padding: 0 7px;
	border: 1px solid #5f7189;
	border-top-color: #b0bccd;
	border-radius: 3px;
	background: #e6eff9;
	color: #1c2f78;
}
.info {
	padding: 0 3px;
	height: 103px;
}
.grids {
	display: flex;
	gap: 1px;
}
.gridbox {
	flex: 1;
	height: 79px;
	background: #fff;
	border: 1px solid #7d96bb;
	overflow: hidden;
}
.gridbox.side {
	flex: 0 0 200px;
}
.grid th {
	height: 31px;
	font-weight: normal;
	color: #111;
	background: linear-gradient(#eff5fd, #dfe9f6);
	border: 1px solid #7d96bb;
	border-width: 0 1px 1px 0;
	white-space: nowrap;
}
.side .grid th {
	height: 20px;
}
.grid th.corner {
	background: linear-gradient(135deg, transparent 50%, #3b72c9 50%) 20px 18px / 10px 11px no-repeat, #e6eff9;
}
.grid th.fill {
	background: #d0dded;
}
.grid td {
	height: 23px;
	padding-left: 1px;
	white-space: nowrap;
	color: #000;
	background: #afd2f6;
	border-right: 1px solid #c3dcf5;
}
.grid td.rowhead {
	background: #c5c9cf;
	padding-left: 3px;
}
.rowhead .arr {
	display: block;
	width: 0;
	border-width: 4px 0 4px 4px;
}
.rowhead .arr.right, .cur .arr.right {
	border-left-color: #000;
}
.hsplit {
	height: 6px;
	background: linear-gradient(#5f6f82, #aab8c6);
}
.w33 { width: 33px; }
.w35 { width: 35px; }
.w40 { width: 40px; }
.w44 { width: 44px; }
.w52 { width: 52px; }
.w54 { width: 54px; }
.w55 { width: 55px; }
.w58 { width: 58px; }
.w63 { width: 63px; }
.w64 { width: 64px; }
.w70 { width: 70px; }
.w75 { width: 75px; }
.w89 { width: 89px; }
.w94 { width: 94px; }
.w112 { width: 112px; }
.w120 { width: 120px; }
.w155 { width: 155px; }
.w192 { width: 192px; }

.lower {
	flex: 1;
	min-height: 0;
	display: flex;
	border-bottom: 2px solid #5f7189;
	padding-bottom: 1px;
}
.gap {
	width: 7px;
	background: linear-gradient(90deg, #66788e, #b5c3d4);
}
.flow {
	width: 666px;
	display: flex;
	flex-direction: column;
}
.flow .legend {
	height: 22px;
}
.flowbody {
	flex: 1;
	min-height: 0;
	display: flex;
	padding-left: 4px;
}
.vtab {
	width: 20px;
	background: linear-gradient(90deg, #d6e5fb, #f2f7fe);
	color: #000;
}
.vtab b {
	display: block;
	width: 20px;
	height: 92px;
	padding: 14px 3px 0 2px;
	writing-mode: vertical-rl;
	text-orientation: sideways;
	background: linear-gradient(90deg, #eef4fd, #a9c6f0);
	clip-path: polygon(0 3px, 100% 3px, 100% 100%, 0 74px);
}
.device {
	width: 196px;
	padding: 7px 1px 0 6px;
	border: 1px solid #3f66a6;
	border-bottom: 0;
	background: linear-gradient(100deg, #84ace6, #d9e8fd);
}
.devhead {
	height: 33px;
	display: flex;
	justify-content: space-between;
	align-items: center;
	padding: 0 7px 0 14px;
	background: #f3f3f3;
}
.devbox {
	height: 278px;
	background: #fff;
	border: 1px solid #7d96bb;
}
.vsplit {
	width: 6px;
	display: flex;
	flex-direction: column;
	align-items: center;
	justify-content: center;
	gap: 5px;
	background: linear-gradient(90deg, #8ba1bd, #cbd9e8);
}
.vsplit .arr {
	border-width: 4px 4px 4px 0;
}
.dots {
	width: 2px;
	height: 40px;
	background: repeating-linear-gradient(#2c4a80 0 2px, transparent 2px 4px);
}
.treepane {
	flex: 1;
	min-width: 0;
	display: flex;
	flex-direction: column;
	background: #fff;
	border: 1px solid #7d96bb;
	border-left: 0;
}
.treeview {
	flex: 1;
	min-height: 0;
	display: flex;
	overflow: hidden;
}
.tree {
	flex: 1;
	height: 0;
	color: #000;
}
.tree th {
	height: 20px;
	padding: 0 0 2px 6px;
	text-align: left;
	font-weight: normal;
	white-space: nowrap;
	background: linear-gradient(#f3f8fe, #dce9f7);
	border-right: 1px solid #b4c7de;
	border-bottom: 1px solid #8ea6c8;
}
.tree th:first-child {
	padding-left: 1px;
}
.tree td {
	height: 19px;
	padding-left: 6px;
	white-space: nowrap;
	border-right: 1px solid #d9d9d9;
}
.tree td:last-child {
	border-right: 0;
}
.tree td:first-child {
	padding: 0;
}
.tree td:nth-child(2) {
	font: 10px/14px "Liberation Mono", monospace;
}
.node {
	height: 19px;
	display: flex;
	align-items: center;
	--dv: repeating-linear-gradient(#444 0 1px, transparent 1px 2px);
	--dh: repeating-linear-gradient(90deg, #444 0 1px, transparent 1px 2px);
}
.node svg {
	width: 16px;
	height: 16px;
	margin-right: 6px;
}
.node .bx {
	width: 9px;
	height: 9px;
	margin-right: 8px;
}
.l0 {
	padding-left: 5px;
	background: var(--dh) 14px 9px / 8px 1px no-repeat;
}
.l1 {
	padding-left: 21px;
	background: var(--dv) 25px 0 / 1px 19px no-repeat, var(--dh) 30px 9px / 8px 1px no-repeat;
}
.l2 {
	padding-left: 54px;
	background: var(--dv) 25px 0 / 1px 19px no-repeat, var(--dv) 41px 0 / 1px 19px no-repeat, var(--dh) 41px 9px / 12px 1px no-repeat;
}
.l2.last {
	background: var(--dv) 25px 0 / 1px 19px no-repeat, var(--dv) 41px 0 / 1px 10px no-repeat, var(--dh) 41px 9px / 12px 1px no-repeat;
}
.hbar {
	height: 16px;
	display: flex;
	align-items: center;
	gap: 6px;
	padding: 0 22px 0 3px;
	background: #f5f5f5;
}
.hbar .arr.right {
	margin-left: auto;
}
.hbar .thumb {
	width: 225px;
	height: 14px;
	border: 1px solid #8f939b;
	border-radius: 1px;
	background: repeating-linear-gradient(90deg, #777 0 1px, transparent 1px 2px) center / 7px 8px no-repeat, linear-gradient(#f1f3f6, #dde2ea);
}
.vbar {
	width: 17px;
	display: flex;
	flex-direction: column;
	align-items: center;
	justify-content: flex-end;
	padding-bottom: 6px;
	background: #f5f5f5;
}
.blank {
	width: 380px;
	display: flex;
	flex-direction: column;
	background: #fff;
	border: 2px solid #7ba0d4;
	border-bottom-width: 1px;
}
.space {
	flex: 1;
}
.blank .hbar {
	padding: 0 8px;
}
.blank .thumb {
	width: 288px;
}
.rpane {
	flex: 1;
	min-width: 0;
	display: flex;
	flex-direction: column;
	border: 1px solid #5d86c4;
	border-width: 0 2px 1px;
}
.rtop {
	height: 25px;
	display: flex;
	justify-content: flex-end;
	align-items: center;
	padding-right: 2px;
	background: linear-gradient(#bccfe8, #dce8f6);
	border-bottom: 1px solid #a3b9d4;
}
.rtop .arr {
	border-top-color: #000;
}
.rlight {
	height: 23px;
	background: linear-gradient(#cfe0f8, #f4f8ff);
}
.rhead {
	height: 32px;
	border-top: 6px solid #8cb0e4;
	border-bottom: 1px solid #6f8cab;
	background: linear-gradient(#eaf3fc, #d7e3ef);
}
.rbody {
	flex: 1;
	min-height: 0;
	display: flex;
	background: #efefef;
}
.notes {
	width: 180px;
	display: flex;
	align-items: flex-end;
	padding: 0 0 9px 1px;
	overflow: hidden;
	font-size: 12px;
	line-height: 12px;
	color: #000;
	white-space: nowrap;
}
.notes .en {
	line-height: 0;
}
.rbody .vbar {
	width: 16px;
	border-right: 2px solid #7ba0d4;
}
.rbody .vbar .thumb {
	flex: 1;
	width: 100%;
	margin-bottom: 39px;
	border: 1px solid #999;
	background: linear-gradient(90deg, #f1f1f1, #c9cacc);
}
.pane {
	flex: 1;
}
.rbody .vbar.far {
	justify-content: space-between;
	padding-top: 8px;
	border-right: 0;
}
.vbar .arr {
	border-left-width: 4px;
	border-right-width: 4px;
}

/* 状态栏 */
.status {
	height: 31px;
	display: grid;
	grid-template-columns: 1fr auto 1fr;
	align-items: center;
	padding: 0 4px 0 9px;
	background: linear-gradient(#eff6fe, #dae6f3);
	color: #23407c;
}
.status a {
	justify-self: end;
	color: #23407c;
}
.who {
	display: flex;
	align-items: center;
	gap: 9px;
}
.ver {
	padding-left: 76px;
}

/* 任务栏 */
.taskbar {
	height: 40px;
	display: flex;
	align-items: center;
	gap: 4px;
	border-top: 1px solid #7f9dbd;
	background: linear-gradient(90deg, #14294a, #10305f 45%, #052c60 70%, #0a2c58 80%, #142842);
	color: #fff;
}
.orb {
	width: 56px;
	padding-left: 8px;
}
.task {
	width: 58px;
	height: 38px;
	display: flex;
	align-items: center;
	justify-content: center;
	border: 1px solid #8496ae;
	border-radius: 3px;
	background: linear-gradient(160deg, #7184a1, #2d4a75 50%, #1c3c6b);
}
.task.multi {
	box-shadow: inset -4px 0 0 #2a456c, inset -5px 0 0 #8496ae;
	padding-right: 5px;
}
.task.on {
	background: linear-gradient(160deg, #e3e9ee, #8ea2b9);
}
.tray {
	margin-left: auto;
	display: flex;
	align-items: center;
	gap: 8px;
}
.tray .arr {
	border-width: 0 4px 4px;
	margin: 0 5px 0 3px;
}
.tray .arr.up {
	border-bottom-color: #fff;
}
.help {
	width: 16px;
	height: 16px;
	border: 1px solid #b5c2e8;
	border-radius: 50%;
	background: #1420a8;
	text-align: center;
	font-weight: bold;
}
.clock {
	width: 72px;
	margin-left: 3px;
	text-align: center;
	font: 12px/18px "Open Sans", sans-serif;
}
.peek {
	width: 14px;
	height: 40px;
	border: 1px solid #7d8ea6;
	background: linear-gradient(#5b6f8c, #1a2f50);
}

/* 对话框 */
.dialog {
	left: 815px;
	top: 252px;
	width: 1027px;
	border: 1px solid #1f2a3a;
	border-radius: 7px;
	padding: 0 6px 6px 5px;
	background: linear-gradient(#8facd6, #a9c1e2 30%, #9db7dc);
	box-shadow: inset 0 0 0 1px #dbe7f6, 2px 3px 14px 4px rgba(0, 0, 0, .65);
}
.dlgtitle {
	height: 27px;
	display: flex;
	align-items: center;
	gap: 5px;
	color: #000;
	background: linear-gradient(transparent 50%, rgba(60, 85, 125, .5));
}
.dlgtitle > span {
	text-shadow: 0 0 6px #fff, 0 0 10px #fff;
}
.dlgbtns {
	margin: 0 1px 0 auto;
	align-self: flex-start;
	display: flex;
	border: 1px solid #3c4a60;
	border-top: 0;
	border-radius: 0 0 4px 4px;
	overflow: hidden;
}
.dlgbtns button {
	width: 28px;
	height: 18px;
	display: flex;
	align-items: center;
	justify-content: center;
	border-right: 1px solid #4b5a70;
	background: linear-gradient(#c6d3e6, #7e95b8 50%, #9fb6d6);
}
.dlgbtns .x {
	width: 46px;
	border: 0;
	background: linear-gradient(#dc9a8c, #c23a24 50%, #d06a4c);
}
.min {
	width: 11px;
	height: 4px;
	margin-top: 5px;
	background: #fff;
	border: 1px solid #556;
}
.max {
	width: 10px;
	height: 9px;
	border: 3px solid #fff;
	outline: 1px solid #556;
}
.client {
	border: 1px solid #3e557a;
	background: #efefef;
}
.dlghead {
	height: 72px;
	display: flex;
	justify-content: space-between;
	align-items: flex-start;
	padding: 12px 11px 0 5px;
}
.dlghead h1 {
	font: bold 25px/36px "Open Sans", "Noto Sans CJK SC", sans-serif;
	color: #000;
	white-space: nowrap;
}
.acts {
	display: flex;
	gap: 40px;
}
.acts button {
	width: 104px;
	height: 37px;
	display: flex;
	align-items: center;
	justify-content: center;
	gap: 9px;
	border: 1px solid #a6bbd6;
	border-radius: 3px;
	background: linear-gradient(#dfeaf7, #cfdff0);
	color: #1c3a66;
}
.listwrap {
	display: grid;
	grid-template-columns: 1fr 17px;
	border: 1px solid #000;
}
.list {
	height: 413px;
	overflow: hidden;
	background: #a9a9a9;
}
.list table {
	font: 15px/20px "Open Sans", "Noto Sans CJK SC", sans-serif;
	color: #6d93da;
}
.list th {
	height: 39px;
	font-size: 20px;
	color: #111;
	border-bottom: 1px solid #8ea6c8;
}
.list th.tri {
	background: #a5bbd6;
	border: 1px solid #d5e0ee;
}
.list th.item {
	padding-right: 22px;
	background: linear-gradient(#f9d79b, #f0c05e);
	border: 1px solid #e79a35;
	border-top: 0;
	border-left: 0;
}
.list th.ok {
	background: #e9f1fb;
	text-align: right;
	white-space: nowrap;
}
.list td {
	height: 50px;
	padding: 0 14px 2px 4px;
	background: #fff;
	border: 1px solid #a5a7ab;
	border-width: 0 1px 1px 0;
}
.list td.rh {
	background: #e3ebf8;
	border-color: #7d9bc6;
	padding: 0 8px;
}
.list .cur .rh {
	background: #fcd08b;
	border-color: #e79a35;
}
.cur .arr {
	display: block;
	width: 0;
}
.list p {
	height: 40px;
}
.list td:last-child {
	border-right: 0;
	padding: 0 12px 2px 0;
}
mark {
	display: inline-block;
	background: #3597fd;
	color: #fff;
}
input[type=checkbox] {
	appearance: none;
	display: block;
	width: 13px;
	height: 13px;
	margin-left: auto;
	border: 1px solid #8b8f95;
	background: #e4e9ef;
}
input[type=checkbox]:checked::after {
	content: "";
	display: block;
	width: 5px;
	height: 8px;
	margin: 0 0 0 3px;
	border: solid #40508e;
	border-width: 0 2px 2px 0;
	transform: rotate(40deg);
}
.dv {
	display: flex;
	flex-direction: column;
	align-items: center;
	padding: 6px 0 5px;
	background: #b2c7e0;
	border-left: 1px solid #7d96bb;
}
.dv .thumb {
	width: 100%;
	height: 166px;
	margin: auto 0 7px;
	border: 1px solid #5f7ea6;
	background: repeating-linear-gradient(#6f8fb9 0 1px, #c6d6ea 1px 2px) center / 9px 8px no-repeat, linear-gradient(90deg, #b5cae5, #92aed1);
}
.dh {
	grid-column: 1 / 3;
	height: 17px;
	display: flex;
	align-items: center;
	padding: 0 23px 0 6px;
	border-top: 1px solid #5f7189;
	background: #b2c7e0;
}
.dh .thumb {
	flex: 1;
	align-self: stretch;
	margin: 0 25px 0 6px;
	border: 1px solid #5f7ea6;
	border-width: 0 1px;
	background: repeating-linear-gradient(90deg, #6f8fb9 0 1px, #c6d6ea 1px 2px) center / 8px 9px no-repeat, linear-gradient(#b5cae5, #92aed1);
}
.pointer {
	left: 555px;
	top: 515px;
}
```
